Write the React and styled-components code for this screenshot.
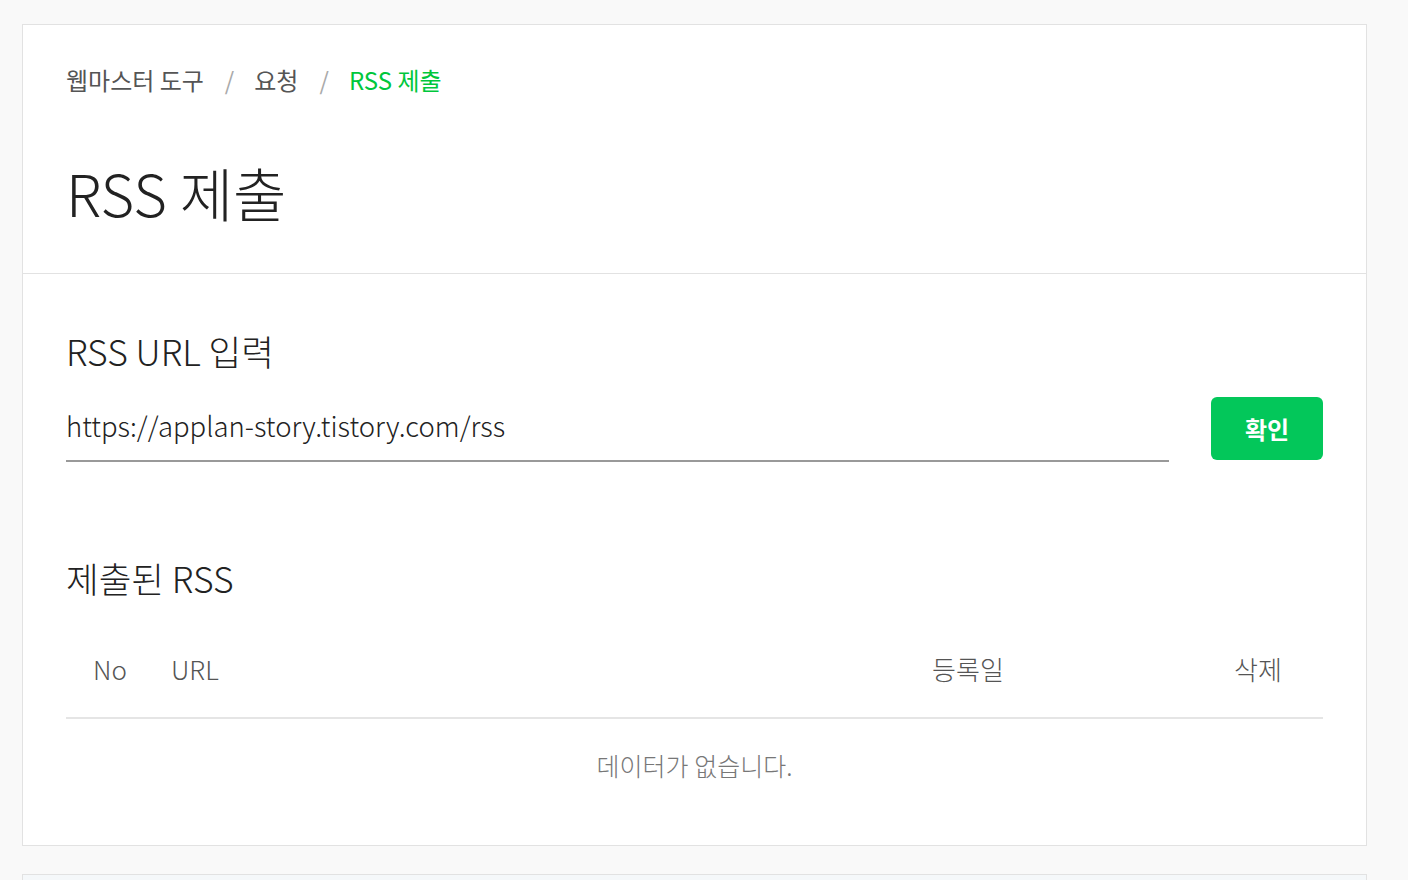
import React from 'react';
import styled, { createGlobalStyle } from 'styled-components';

const GlobalStyle = createGlobalStyle`
  body {
    margin: 0;
    background: #f9f9f9;
    font-family: "Noto Sans CJK KR", "Noto Sans", sans-serif;
    color: #222;
  }
`;

const Page = styled.div`
  padding: 24px 0 0 22px;
  width: 1345px;
`;

const Card = styled.section`
  box-sizing: border-box;
  width: 1345px;
  background: ${(p) => (p.tinted ? '#f5f8fa' : '#fff')};
  border: 1px solid #e2e2e2;
  margin-bottom: 28px;
  min-height: ${(p) => (p.tinted ? '200px' : 'auto')};
`;

const Header = styled.header`
  padding: 37px 43px 41px;
  border-bottom: 1px solid #e2e2e2;
`;

const Crumbs = styled.nav`
  display: flex;
  align-items: center;
  font-size: 24px;
  line-height: 36px;
  color: #555;
`;

const Crumb = styled.span`
  color: ${(p) => (p.active ? '#00c73c' : '#555')};
`;

const Slash = styled.span`
  color: #aaa;
  margin: 0 20px 0 21px;
`;

const Title = styled.h1`
  margin: 58px 0 0;
  font-size: 58px;
  font-weight: 300;
  line-height: 72px;
  color: #222;
  padding-bottom: 4px;
`;

const Body = styled.div`
  padding: 52px 43px 62px;
`;

const SubTitle = styled.h2`
  margin: ${(p) => p.mt || 0} 0 0;
  font-size: 35.5px;
  font-weight: 300;
  line-height: 50px;
  color: #222;
`;

const InputRow = styled.div`
  display: flex;
  align-items: flex-start;
  gap: 42px;
  margin-top: 21px;
`;

const UrlInput = styled.input`
  box-sizing: border-box;
  width: 1103px;
  height: 65px;
  padding: 0 0 7px;
  border: 0;
  border-bottom: 2px solid #999;
  outline: none;
  background: transparent;
  font-family: inherit;
  font-size: 27.5px;
  font-weight: 300;
  color: #222;
`;

const Button = styled.button`
  width: 112px;
  height: 63px;
  border: 0;
  border-radius: 6px;
  background: #03c75a;
  color: #fff;
  font-family: inherit;
  font-size: 24px;
  font-weight: 700;
  cursor: pointer;
`;

const Table = styled.div`
  margin-top: 21px;
`;

const HeadRow = styled.div`
  display: grid;
  grid-template-columns: 88px 1fr 220px 115px 130px;
  padding: 27px 0 30px;
  border-bottom: 2px solid #e5e5e5;
  font-size: 26px;
  font-weight: 300;
  line-height: 36px;
  color: #555;
`;

const Th = styled.div`
  text-align: ${(p) => p.align || 'center'};
  padding-left: ${(p) => (p.align === 'left' ? '17px' : 0)};
  grid-column: ${(p) => p.col || 'auto'};
`;

const Empty = styled.div`
  padding-top: 28px;
  text-align: center;
  font-size: 25px;
  font-weight: 300;
  line-height: 36px;
  color: #777;
`;

export default function App() {
  return (
    <>
      <GlobalStyle />
      <Page>
        <Card>
          <Header>
            <Crumbs>
              <Crumb>웹마스터 도구</Crumb>
              <Slash>/</Slash>
              <Crumb>요청</Crumb>
              <Slash>/</Slash>
              <Crumb active>RSS 제출</Crumb>
            </Crumbs>
            <Title>RSS 제출</Title>
          </Header>
          <Body>
            <SubTitle>RSS URL 입력</SubTitle>
            <InputRow>
              <UrlInput defaultValue="https://applan-story.tistory.com/rss" />
              <Button>확인</Button>
            </InputRow>
            <SubTitle mt="91px">제출된 RSS</SubTitle>
            <Table>
              <HeadRow>
                <Th>No</Th>
                <Th align="left">URL</Th>
                <Th>등록일</Th>
                <Th col="5">삭제</Th>
              </HeadRow>
              <Empty>데이터가 없습니다.</Empty>
            </Table>
          </Body>
        </Card>
        <Card tinted />
      </Page>
    </>
  );
}
